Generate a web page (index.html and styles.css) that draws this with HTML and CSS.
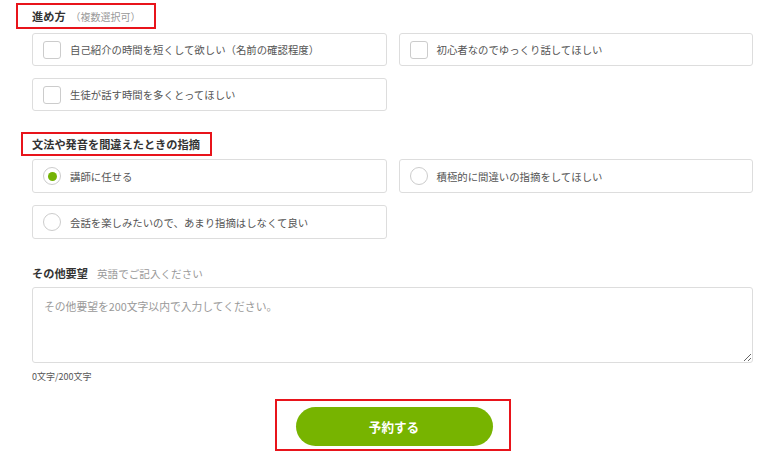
FILE: index.html
```html
<!DOCTYPE html>
<html lang="ja">
<head>
<meta charset="utf-8">
<link rel="stylesheet" href="styles.css">
</head>
<body>
<div class="page">
  <div class="hl hl-one">
    <span class="title">進め方</span><span class="sub">（複数選択可）</span>
  </div>
  <div class="grid grid-one">
    <label class="card"><span class="check"></span><span>自己紹介の時間を短くして欲しい（名前の確認程度）</span></label>
    <label class="card"><span class="check"></span><span>初心者なのでゆっくり話してほしい</span></label>
    <label class="card"><span class="check"></span><span>生徒が話す時間を多くとってほしい</span></label>
  </div>

  <div class="hl hl-two">
    <span class="title">文法や発音を間違えたときの指摘</span>
  </div>
  <div class="grid grid-two">
    <label class="card tall"><span class="radio on"></span><span>講師に任せる</span></label>
    <label class="card tall"><span class="radio"></span><span>積極的に間違いの指摘をしてほしい</span></label>
    <label class="card tall"><span class="radio"></span><span>会話を楽しみたいので、あまり指摘はしなくて良い</span></label>
  </div>

  <div class="other-label"><span class="title">その他要望</span><span class="hint">英語でご記入ください</span></div>
  <textarea class="memo" placeholder="その他要望を200文字以内で入力してください。"></textarea>
  <div class="count">0文字/200文字</div>

  <div class="submit-row">
    <div class="submit-box"><button class="submit">予約する</button></div>
  </div>
</div>
</body>
</html>
```

FILE: styles.css
```css
* { box-sizing: border-box; }
body {
  margin: 0;
  background: #fff;
  font-family: "Noto Sans CJK JP", "Noto Sans", sans-serif;
  color: #555;
}
.page {
  padding: 0 27px 0 32px;
}
.hl {
  display: flex;
  width: max-content;
  align-items: center;
  border: 2px solid #e8141b;
}
.hl-one {
  height: 26px;
  margin: 3px 0 0 -16px;
  padding: 0 13px 0 14px;
}
.hl-two {
  height: 24px;
  margin: 21px 0 0 -11px;
  padding: 0 10px 0 9px;
}
.title {
  font-size: 11.2px;
  font-weight: 700;
  color: #333;
}
.sub {
  font-size: 10px;
  color: #999;
  margin-left: 5px;
}
.grid {
  display: grid;
  grid-template-columns: 1fr 1fr;
  column-gap: 12px;
  row-gap: 12px;
}
.grid-one { margin-top: 4px; }
.grid-two { margin-top: 3px; }
.card {
  display: flex;
  align-items: center;
  height: 33px;
  border: 1px solid #ddd;
  border-radius: 3px;
  padding: 0 10px;
  gap: 9px;
  font-size: 10.4px;
  color: #555;
}
.card.tall { height: 34px; }
.check {
  width: 18px;
  height: 18px;
  border: 1px solid #ccc;
  border-radius: 3px;
  flex: none;
}
.radio {
  width: 18px;
  height: 18px;
  border: 1px solid #ccc;
  border-radius: 50%;
  flex: none;
  display: flex;
  align-items: center;
  justify-content: center;
}
.radio.on::after {
  content: "";
  width: 9px;
  height: 9px;
  border-radius: 50%;
  background: #74b305;
}
.other-label {
  margin-top: 26px;
  height: 16px;
  display: flex;
  align-items: center;
}
.hint {
  font-size: 10.6px;
  color: #999;
  margin-left: 9px;
}
.memo {
  display: block;
  width: 100%;
  height: 76px;
  margin-top: 6px;
  border: 1px solid #ddd;
  border-radius: 3px;
  padding: 10px 11px;
  font-family: inherit;
  font-size: 10.8px;
  color: #555;
  resize: vertical;
  outline: none;
}
.memo::placeholder { color: #999; }
.count {
  margin-top: 8px;
  height: 12px;
  line-height: 12px;
  font-size: 9px;
  color: #555;
}
.submit-row {
  display: flex;
  justify-content: center;
  margin-top: 16px;
}
.submit-box {
  border: 2px solid #e8141b;
  padding: 6px 16px 3px 19px;
}
.submit {
  display: block;
  width: 197px;
  height: 39px;
  border: none;
  border-radius: 20px;
  background: #77b400;
  color: #fff;
  font-family: inherit;
  font-size: 12.6px;
  font-weight: 700;
  cursor: pointer;
}
```
